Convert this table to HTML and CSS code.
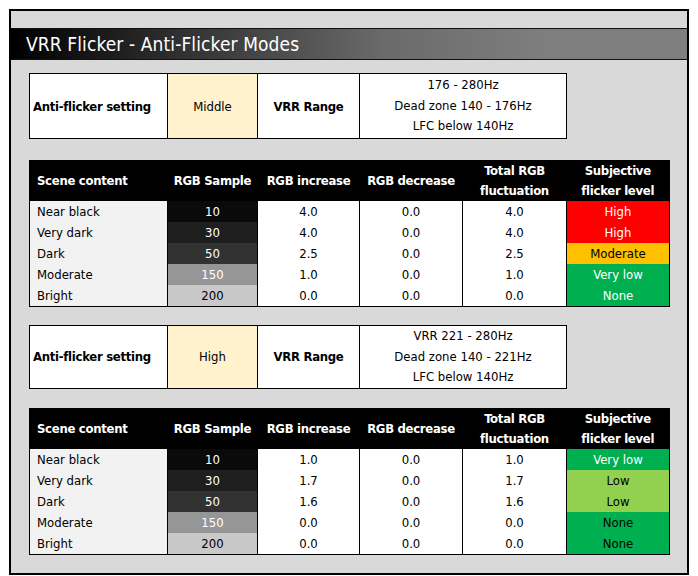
FILE: index.html
```html
<!DOCTYPE html>
<html>
<head>
<meta charset="utf-8">
<link rel="stylesheet" href="styles.css">
</head>
<body>
<div class="frame">
  <div class="titlebar"><span class="title">VRR Flicker - Anti-Flicker Modes</span></div>

  <table class="setting">
    <colgroup><col class="c1"><col class="c2"><col class="c3"><col class="c4"></colgroup>
    <tr>
      <td class="lbl">Anti-flicker setting</td>
      <td class="mode">Middle</td>
      <td class="lbl ctr">VRR Range</td>
      <td class="range">176 - 280Hz<br>Dead zone 140 - 176Hz<br>LFC below 140Hz</td>
    </tr>
  </table>

  <table class="data">
    <colgroup><col class="d1"><col class="d2"><col class="d3"><col class="d4"><col class="d5"><col class="d6"></colgroup>
    <tr class="head">
      <th class="left">Scene content</th><th>RGB Sample</th><th>RGB increase</th><th>RGB decrease</th><th>Total RGB<br>fluctuation</th><th>Subjective<br>flicker level</th>
    </tr>
    <tr><td class="scene">Near black</td><td class="s10">10</td><td>4.0</td><td>0.0</td><td>4.0</td><td class="lv-high">High</td></tr>
    <tr><td class="scene">Very dark</td><td class="s30">30</td><td>4.0</td><td>0.0</td><td>4.0</td><td class="lv-high">High</td></tr>
    <tr><td class="scene">Dark</td><td class="s50">50</td><td>2.5</td><td>0.0</td><td>2.5</td><td class="lv-mod">Moderate</td></tr>
    <tr><td class="scene">Moderate</td><td class="s150">150</td><td>1.0</td><td>0.0</td><td>1.0</td><td class="lv-vlow">Very low</td></tr>
    <tr><td class="scene">Bright</td><td class="s200">200</td><td>0.0</td><td>0.0</td><td>0.0</td><td class="lv-none">None</td></tr>
  </table>

  <table class="setting second">
    <colgroup><col class="c1"><col class="c2"><col class="c3"><col class="c4"></colgroup>
    <tr>
      <td class="lbl">Anti-flicker setting</td>
      <td class="mode">High</td>
      <td class="lbl ctr">VRR Range</td>
      <td class="range">VRR 221 - 280Hz<br>Dead zone 140 - 221Hz<br>LFC below 140Hz</td>
    </tr>
  </table>

  <table class="data second">
    <colgroup><col class="d1"><col class="d2"><col class="d3"><col class="d4"><col class="d5"><col class="d6"></colgroup>
    <tr class="head">
      <th class="left">Scene content</th><th>RGB Sample</th><th>RGB increase</th><th>RGB decrease</th><th>Total RGB<br>fluctuation</th><th>Subjective<br>flicker level</th>
    </tr>
    <tr><td class="scene">Near black</td><td class="s10">10</td><td>1.0</td><td>0.0</td><td>1.0</td><td class="lv-vlow">Very low</td></tr>
    <tr><td class="scene">Very dark</td><td class="s30">30</td><td>1.7</td><td>0.0</td><td>1.7</td><td class="lv-low">Low</td></tr>
    <tr><td class="scene">Dark</td><td class="s50">50</td><td>1.6</td><td>0.0</td><td>1.6</td><td class="lv-low">Low</td></tr>
    <tr><td class="scene">Moderate</td><td class="s150">150</td><td>0.0</td><td>0.0</td><td>0.0</td><td class="lv-none dark">None</td></tr>
    <tr><td class="scene">Bright</td><td class="s200">200</td><td>0.0</td><td>0.0</td><td>0.0</td><td class="lv-none dark">None</td></tr>
  </table>
</div>
</body>
</html>
```
FILE: styles.css
```css
html, body {
  margin: 0;
  padding: 0;
  background: #ffffff;
}
body {
  font-family: "DejaVu Sans Condensed", "DejaVu Sans", sans-serif;
  font-size: 13px;
  color: #000;
}
.frame {
  margin: 9px 0 0 9px;
  width: 676px;
  height: 545px;
  border: 2px solid #000;
  background: #d9d9d9;
  padding-top: 17px;
  box-sizing: content-box;
}
.titlebar {
  height: 30px;
  border-top: 1px solid #111;
  border-bottom: 1px solid #111;
  background: linear-gradient(to right, #000 0%, #3a3a3a 30%, #6a6a6a 55%, #7f7f7f 80%, #7f7f7f 100%);
  display: flex;
  align-items: center;
  padding-left: 15px;
}
.title {
  color: #fff;
  font-size: 19px;
  letter-spacing: 0.1px;
}
table {
  border-collapse: collapse;
  table-layout: fixed;
  margin-left: 18px;
}
.setting {
  width: 537px;
  margin-top: 13px;
  border: 1px solid #000;
  background: #fff;
}
.setting.second {
  margin-top: 18px;
}
.setting td {
  border: 1px solid #000;
  height: 64px;
  padding: 0;
  vertical-align: middle;
}
.setting.second td { height: 59px; }
.c1 { width: 138px; }
.c2 { width: 90px; }
.c3 { width: 102px; }
.c4 { width: 207px; }
.lbl {
  font-weight: bold;
  letter-spacing: -0.3px;
  padding-left: 3px !important;
}
.ctr { text-align: center; padding-left: 0 !important; }
.mode {
  background: #fff2cc;
  text-align: center;
}
.range {
  text-align: center;
  line-height: 20.5px;
}
.data {
  width: 640px;
  margin-top: 21px;
  border: 1px solid #000;
  background: #fff;
}
.data.second {
  margin-top: 19px;
}
.d1 { width: 138px; }
.d2 { width: 90px; }
.d3 { width: 102px; }
.d4 { width: 103px; }
.d5 { width: 104px; }
.d6 { width: 103px; }
.head th {
  background: #000;
  color: #fff;
  font-weight: bold;
  letter-spacing: -0.3px;
  height: 40px;
  line-height: 20px;
  padding: 0;
  text-align: center;
  vertical-align: middle;
}
.head th.left {
  text-align: left;
  padding-left: 7px;
}
.data td {
  height: 21px;
  padding: 0;
  text-align: center;
  border-left: 1px solid #000;
  border-right: 1px solid #000;
  line-height: 21px;
}
.data td.scene {
  text-align: left;
  padding-left: 7px;
  background: #f2f2f2;
}
.s10 { background: #0a0a0a; color: #fff; }
.s30 { background: #1e1e1e; color: #fff; }
.s50 { background: #323232; color: #fff; }
.s150 { background: #969696; color: #fff; }
.s200 { background: #c8c8c8; color: #000; }
.lv-high { background: #ff0000; color: #fff; }
.lv-mod { background: #ffc000; color: #000; }
.lv-vlow { background: #00b050; color: #fff; }
.lv-low { background: #92d050; color: #000; }
.lv-none { background: #00b050; color: #fff; }
.lv-none.dark { color: #000; }
```
